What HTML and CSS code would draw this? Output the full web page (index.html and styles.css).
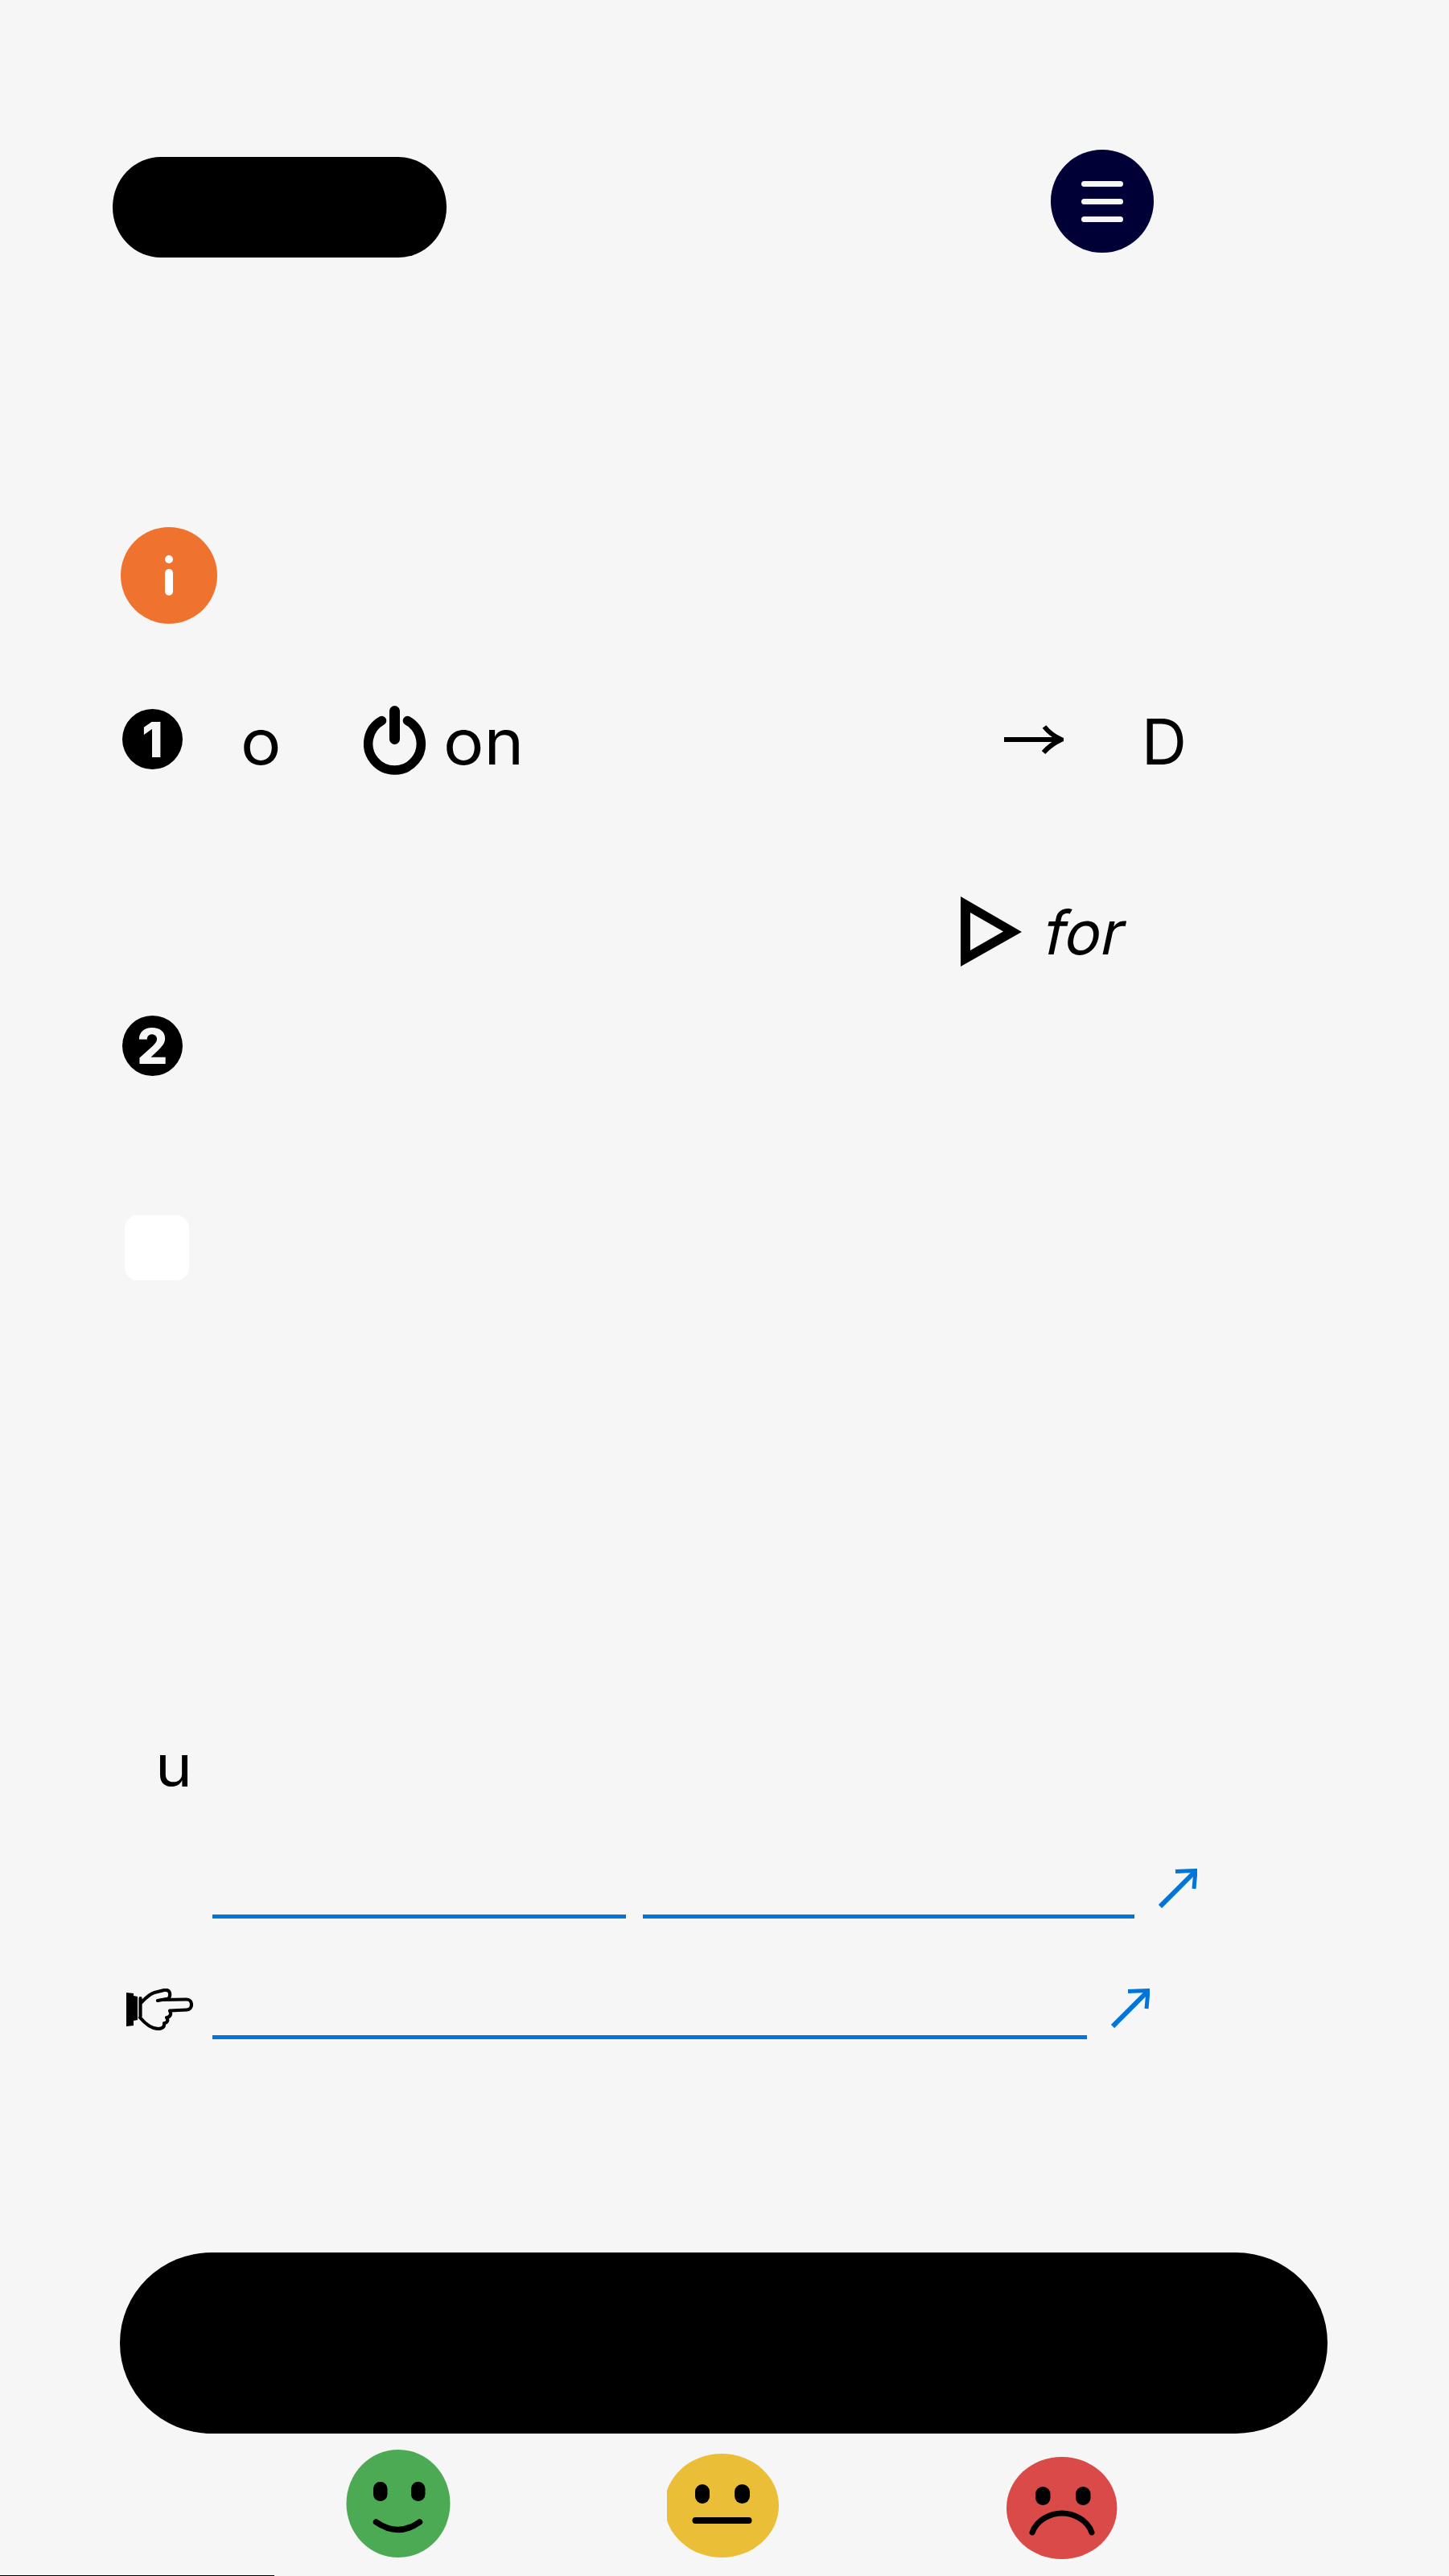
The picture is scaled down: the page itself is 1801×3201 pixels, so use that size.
FILE: index.html
```html
<!DOCTYPE html>
<html lang="en">
<head>
<meta charset="utf-8">
<title>Getting started</title>
<link rel="stylesheet" href="styles.css">
</head>
<body>
<div class="page">
  <header class="top">
    <div class="logo"></div>
    <button class="menu" type="button" aria-label="Menu"><i></i><i></i><i></i></button>
  </header>

  <div class="info">
    <svg width="120" height="120" viewBox="0 0 120 120"><circle cx="60" cy="60" r="60" fill="#f0722f"/><circle cx="60" cy="40" r="5" fill="#fff"/><rect x="55" y="52" width="10" height="33" rx="5" fill="#fff"/></svg>
  </div>

  <div class="step">
    <span class="badge badge-one">1</span>
    <span class="word wide word-o">o</span>
    <svg class="power" width="78" height="87" viewBox="0 0 78 87"><path d="M22.500 18.600A32.800 32.800 0 1 0 54.500 18.600" fill="none" stroke="#000" stroke-width="11.500" stroke-linecap="round"/><path d="M38.500 6.500V41.500" fill="none" stroke="#000" stroke-width="13" stroke-linecap="round"/></svg>
    <span class="word wide word-on">on</span>
    <svg class="arrow" width="74" height="36" viewBox="0 0 74 36"><path d="M0 18H71" fill="none" stroke="#000" stroke-width="6"/><path d="M50 2Q58 12 71 18Q58 24 49 34" fill="none" stroke="#000" stroke-width="6"/></svg>
    <span class="word word-d">D</span>
  </div>

  <div class="play-row">
    <svg width="77" height="88" viewBox="0 0 77 88"><path fill-rule="evenodd" d="M0 0L76 44L0 87ZM12 20V67L53 43.500Z"/></svg>
    <em class="word word-for">for</em>
  </div>

  <span class="badge badge-two">2</span>
  <div class="swatch"></div>

  <div class="word wide word-u">u</div>

  <div class="links links-first">
    <a class="link link-a"></a>
    <a class="link link-b"></a>
    <svg class="out out-first" width="48" height="49" viewBox="0 0 48 49"><path d="M2 47L45 4" fill="none" stroke="#0275d8" stroke-width="6"/><path d="M21 3.500L46 2.500L44 25" fill="none" stroke="#0275d8" stroke-width="5"/></svg>
  </div>

  <div class="links links-second">
    <svg class="hand" width="83" height="52" viewBox="0 0 83 52">
      <path d="M0 5L9 6V9L14 10V39L9 40V46L0 47Z"/>
      <path d="M17.500 12V35M18 18C22 14 28 7 35 5L47 2C52 1 55 4 54 9C54 11 52 13 50 13L39 15M43 14L75 13.500C79 13.500 81 17 81 20C81 24 78 26.500 75 26.500L54 27.500C57 33 53 36 50 36C53 40 50 43 47 43C48 48 44 50 40 50C30 50 22 42 17 36" fill="none" stroke="#000" stroke-width="4.200" stroke-linejoin="round" stroke-linecap="round"/>
    </svg>
    <a class="link link-c"></a>
    <svg class="out" width="48" height="49" viewBox="0 0 48 49"><path d="M2 47L45 4" fill="none" stroke="#0275d8" stroke-width="6"/><path d="M21 3.500L46 2.500L44 25" fill="none" stroke="#0275d8" stroke-width="5"/></svg>
  </div>

  <div class="cta"></div>

  <div class="feedback">
    <svg class="face face-good" width="130" height="134" viewBox="0 0 130 134"><ellipse cx="65" cy="67" rx="64.500" ry="67" fill="#4caa55"/><rect x="34" y="40" width="17.500" height="24" rx="8.500"/><rect x="81" y="40" width="17.500" height="24" rx="8.500"/><path d="M37.500 90Q65 109 91.500 90" fill="none" stroke="#000" stroke-width="7.500" stroke-linecap="round"/></svg>
    <svg class="face face-okay" width="140" height="129" viewBox="0 0 140 129"><ellipse cx="68" cy="64.500" rx="71" ry="64.500" fill="#ebbe38"/><rect x="35" y="38" width="18" height="24" rx="9"/><rect x="84" y="38" width="19" height="24" rx="9.500"/><rect x="31.500" y="79" width="74" height="8" rx="4"/></svg>
    <svg class="face face-bad" width="138" height="127" viewBox="0 0 138 127"><ellipse cx="68.700" cy="63.500" rx="68.700" ry="63.500" fill="#d94a49"/><rect x="36" y="37" width="18.500" height="23" rx="9"/><rect x="86" y="37" width="18.500" height="23" rx="9"/><path d="M32 94C38 77 56 70 69 70C82 70 100 77 106 94" fill="none" stroke="#000" stroke-width="7" stroke-linecap="round"/></svg>
  </div>

  <div class="progress"></div>
</div>
</body>
</html>
```
FILE: styles.css
```css
* { box-sizing: border-box; }

html, body {
  margin: 0;
  padding: 0;
  background: #f6f6f6;
}

.page {
  position: relative;
  width: 1801px;
  height: 3201px;
  overflow: hidden;
  color: #000;
  font-family: Inter, "Liberation Sans", sans-serif;
}

svg { display: block; flex: none; }

/* header */
.top {
  display: flex;
  align-items: flex-start;
  justify-content: space-between;
  padding: 186px 367px 0 140px;
}

.logo {
  width: 415px;
  height: 125px;
  margin-top: 9px;
  border-radius: 60px / 62.5px;
  background: #000;
}

.menu {
  display: flex;
  flex-direction: column;
  align-items: center;
  justify-content: center;
  gap: 15px;
  width: 128px;
  height: 128px;
  padding: 0;
  border: 0;
  border-radius: 50%;
  background: #000037;
}

.menu i {
  display: block;
  width: 52px;
  height: 7px;
  border-radius: 4px;
  background: #f6f6f6;
}

.info { margin: 335px 0 0 150px; }

/* numbered steps */
.badge {
  display: flex;
  align-items: center;
  justify-content: center;
  flex: none;
  width: 75px;
  height: 75px;
  border-radius: 50%;
  background: #000;
  color: #f6f6f6;
  font-size: 60px;
  font-weight: 800;
  line-height: 1;
}

.badge-two { margin: 60px 0 0 152px; }

.step {
  display: flex;
  align-items: flex-start;
  height: 86px;
  margin: 102px 0 0 152px;
}

.badge-one { margin-top: 4px; }

.word {
  font-size: 78px;
  font-weight: 400;
  line-height: 86px;
}

.wide {
  transform: scaleX(1.08);
  transform-origin: left center;
}

.word-o { margin-left: 72px; margin-top: 2px; }
.power { margin-left: 106px; }
.word-on { margin-left: 21px; margin-top: 2px; }
.arrow { margin: 24px 0 0 604px; }
.word-d { margin: 2px 0 0 97px; }

.play-row {
  display: flex;
  align-items: flex-start;
  margin: 151px 0 0 1194px;
}

.word-for {
  margin: 2px 0 0 29px;
  font-size: 75px;
  font-style: normal;
  transform: skewX(-12deg);
}

.swatch {
  width: 80px;
  height: 81px;
  margin: 173px 0 0 155px;
  border-radius: 16px;
  background: #fff;
}

.word-u {
  width: fit-content;
  margin: 560px 0 0 193px;
  font-size: 72px;
}

/* resource links */
.links {
  display: flex;
  align-items: flex-end;
}

.links-first {
  height: 62px;
  margin: 85px 0 0 264px;
  gap: 21px;
}

.links-second {
  height: 63px;
  margin: 87px 0 0 157px;
}

.link {
  display: block;
  height: 5px;
  background: #0275d8;
}

.link-a { width: 514px; }
.link-b { width: 611px; }
.link-c { width: 1087px; margin-left: 24px; }

.out { align-self: flex-start; margin-left: 30px; }
.out-first { margin-left: 9px; }

.hand { align-self: flex-start; }

.cta {
  height: 225px;
  margin: 265px 151px 0 149px;
  border-radius: 114px / 112.5px;
  background: #000;
}

/* rating faces */
.feedback {
  display: flex;
  align-items: flex-start;
  margin: 20px 0 0 430px;
}

.face-okay { margin: 5px 0 0 269px; }
.face-bad { margin: 9px 0 0 282px; }

.progress {
  position: absolute;
  left: 0;
  bottom: 0;
  width: 341px;
  height: 1px;
  background: #000;
}
```
